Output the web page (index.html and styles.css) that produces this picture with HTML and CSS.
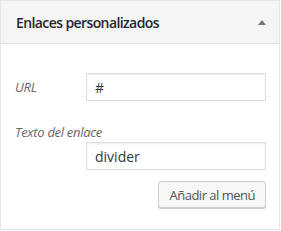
FILE: index.html
```html
<!DOCTYPE html>
<html lang="es">
<head>
  <meta charset="UTF-8">
  <title>Enlaces personalizados</title>
  <link rel="stylesheet" href="styles.css">
</head>
<body>

  <div class="panel">
    <div class="panel-title">
      <span>Enlaces personalizados</span>
      <span class="arrow"></span>
    </div>
    <div class="panel-body">
      <div class="row inline">
        <label>URL</label>
        <input type="text" value="#">
      </div>
      <div class="row">
        <label>Texto del enlace</label>
        <input type="text" value="divider">
      </div>
      <div class="actions">
        <button>Añadir al menú</button>
      </div>
    </div>
  </div>

</body>
</html>
```

FILE: styles.css
```css
body {
  margin: 0;
  background: #fff;
  font-family: "Open Sans", sans-serif;
  font-size: 13px;
  color: #23282d;
}

.panel {
  width: 278px;
  height: 228px;
  border: 1px solid #e5e5e5;
  background: #fff;
}

.panel-title {
  display: flex;
  justify-content: space-between;
  align-items: center;
  height: 42px;
  padding: 0 13px 0 15px;
  background: #f5f5f5;
  border-bottom: 1px solid #e1e1e1;
  font-size: 14px;
  font-weight: 600;
  letter-spacing: -0.6px;
}

.arrow {
  width: 0;
  height: 0;
  border-left: 4px solid transparent;
  border-right: 4px solid transparent;
  border-bottom: 5px solid #72777c;
}

.panel-body {
  padding: 29px 13px 0 14px;
}

.row {
  margin-bottom: 11px;
}

.row label {
  display: block;
  font-style: italic;
  color: #666;
  font-size: 13px;
  letter-spacing: -0.3px;
  margin-bottom: 1px;
}

.row.inline {
  display: flex;
  align-items: center;
  margin-bottom: 22px;
}

.row.inline label {
  width: 71px;
  margin: 0;
}

input {
  display: block;
  box-sizing: border-box;
  width: 180px;
  height: 28px;
  margin-left: 71px;
  padding: 3px 8px;
  border: 1px solid #ddd;
  box-shadow: inset 0 1px 2px rgba(0,0,0,0.07);
  font-family: "Open Sans", sans-serif;
  font-size: 14px;
  color: #32373c;
}

.row.inline input {
  margin-left: 0;
}

.actions {
  display: flex;
  justify-content: flex-end;
}

button {
  height: 27px;
  padding: 0 10px;
  background: #f7f7f7;
  border: 1px solid #ccc;
  border-radius: 3px;
  box-shadow: 0 1px 0 #ccc;
  color: #555;
  font-family: "Open Sans", sans-serif;
  font-size: 13px;
  letter-spacing: -0.5px;
  cursor: pointer;
}
```
